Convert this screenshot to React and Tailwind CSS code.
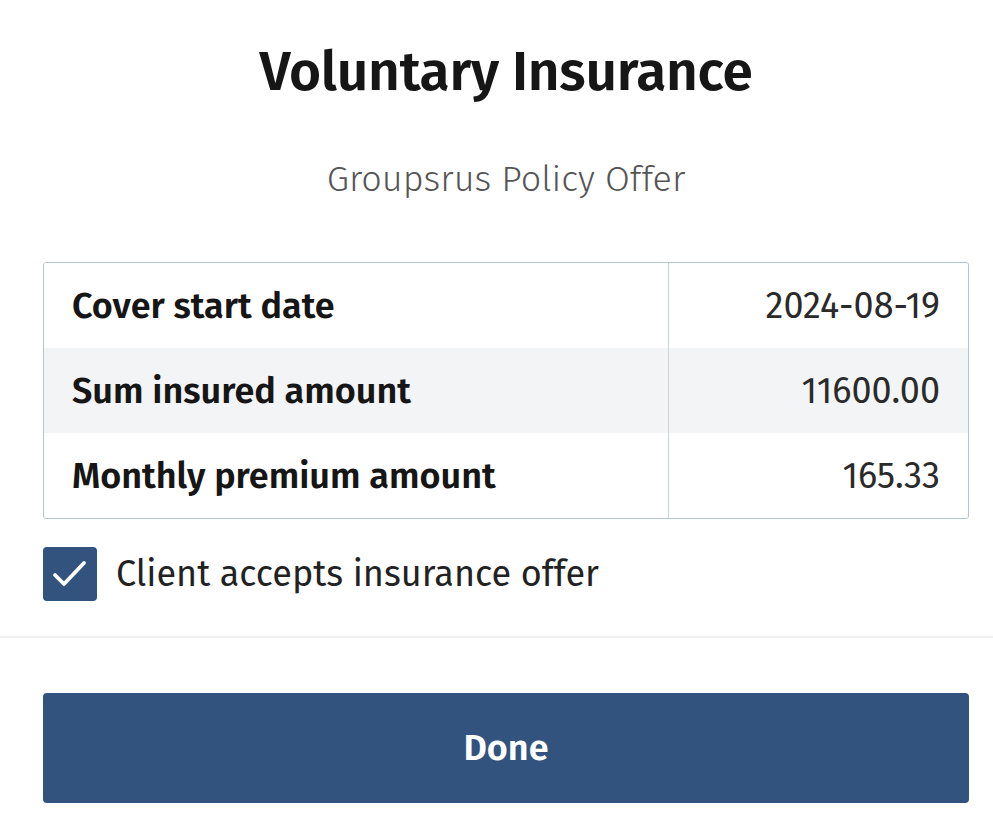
import React, { useState } from "react";

const rows = [
  { label: "Cover start date", value: "2024-08-19" },
  { label: "Sum insured amount", value: "11600.00" },
  { label: "Monthly premium amount", value: "165.33" },
];

const App = () => {
  const [accepted, setAccepted] = useState(true);

  return (
    <div
      className="w-[993px] h-[831px] bg-white text-[#1a1a1a] overflow-hidden"
      style={{ fontFamily: '"Fira Sans", "Noto Sans", sans-serif' }}
    >
      <div className="pl-[43px] pr-[24px]">
        <h1 className="pt-[36px] text-center text-[55px] leading-[72px] font-semibold tracking-[-0.3px] text-[#161616]">
          Voluntary Insurance
        </h1>
        <p className="mt-[49px] text-center text-[36px] leading-[44px] font-light text-[#555]">
          Groupsrus Policy Offer
        </p>

        <div className="mt-[61px] border border-[#b5c3cb] rounded-[3px] overflow-hidden">
          {rows.map((r, i) => (
            <div
              key={r.label}
              className={`flex h-[85px] ${i === 1 ? "bg-[#f3f4f6]" : "bg-white"}`}
            >
              <div className="w-[625px] flex items-center pl-[28px] border-r border-[#c9d3d9] text-[36px] font-semibold text-[#161616]">
                {r.label}
              </div>
              <div className="flex-1 flex items-center justify-end pr-[28px] text-[36px] text-[#2a2a2a]">
                {r.value}
              </div>
            </div>
          ))}
        </div>

        <label className="mt-[28px] h-[54px] flex items-center gap-[19px] cursor-pointer">
          <button
            type="button"
            onClick={() => setAccepted(!accepted)}
            className={`w-[54px] h-[54px] shrink-0 rounded-[4px] flex items-center justify-center ${
              accepted ? "bg-[#33537f]" : "bg-white border-2 border-[#b5c3cb]"
            }`}
          >
            {accepted && (
              <svg width="48" height="48" viewBox="0 0 24 24" fill="none">
                <path
                  d="M4.5 12.5l4.5 4.5 10-10.5"
                  stroke="white"
                  strokeWidth="1.9"
                  strokeLinecap="round"
                  strokeLinejoin="round"
                />
              </svg>
            )}
          </button>
          <span className="text-[36px] leading-[54px] text-[#222]">Client accepts insurance offer</span>
        </label>
      </div>

      <div className="mt-[35px] border-t-2 border-[#eef0f2]" />

      <div className="pl-[43px] pr-[24px] pt-[55px]">
        <button
          type="button"
          className="w-full h-[110px] rounded-[4px] bg-[#33537f] text-white text-[36px] font-semibold"
        >
          Done
        </button>
      </div>
    </div>
  );
};

export default App;
